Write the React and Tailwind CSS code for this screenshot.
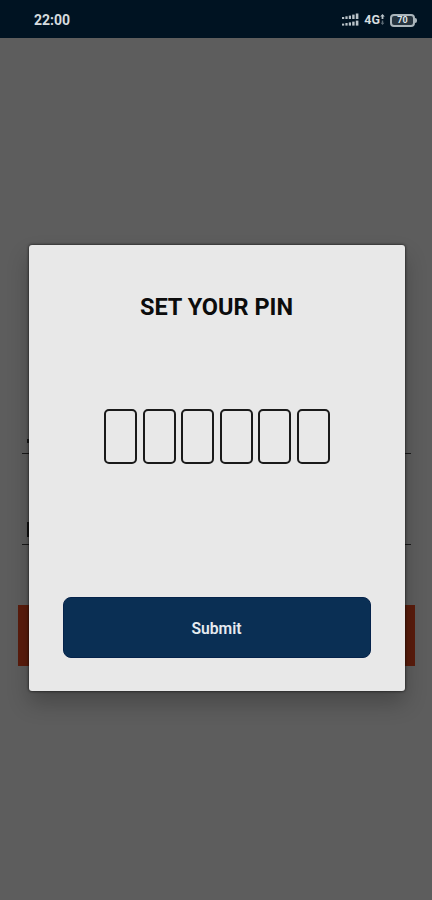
import { useState } from "react";

const PIN_LENGTH = 6;

function SignalIcon() {
  return (
    <svg className="h-[14px] w-[17px]" viewBox="0 0 17 14" fill="#b9c3c9">
      <rect x="0" y="4" width="2.2" height="2" />
      <rect x="3.4" y="3.3" width="2.2" height="2.7" />
      <rect x="6.8" y="2.6" width="2.2" height="3.4" />
      <rect x="10.2" y="1.6" width="2.4" height="4.4" />
      <rect x="13.8" y="0.5" width="2.6" height="5.5" />
      <rect x="0" y="10.6" width="2.2" height="2" />
      <rect x="3.4" y="10" width="2.2" height="2.6" />
      <rect x="6.8" y="9.4" width="2.2" height="3.2" />
      <rect x="10.2" y="8.6" width="2.4" height="4" />
      <rect x="13.8" y="7.6" width="2.6" height="5" />
    </svg>
  );
}

function DataArrows() {
  return (
    <svg className="h-[12px] w-[5px]" viewBox="0 0 5 12">
      <path d="M2.5 0 L4.8 2.6 H3.4 V5 H1.6 V2.6 H0.2 Z" fill="#b9c3c9" />
      <path d="M1.8 6.6 H3.2 V8.8 H4.4 L2.5 11 L0.6 8.8 H1.8 Z" fill="#5c6b75" />
    </svg>
  );
}

function Battery() {
  return (
    <div className="flex items-center">
      <div className="flex h-[13px] w-[25px] items-center justify-center rounded-[4px] border-2 border-[#aab5bb] bg-[#26343f] text-[9px] leading-none font-bold text-[#dfe5e8]">
        70
      </div>
      <div className="h-[5px] w-[2px] rounded-r-full bg-[#aab5bb]" />
    </div>
  );
}

function StatusBar() {
  return (
    <div className="flex h-[38px] items-center justify-between bg-[#001322] pt-[2px] pr-[15px] pl-[34px]">
      <span className="text-[14px] font-bold text-[#d5dcdf]">22:00</span>
      <div className="flex items-center">
        <SignalIcon />
        <span className="ml-[5px] text-[12.5px] leading-none font-bold text-[#d5dcdf]">
          4G
        </span>
        <DataArrows />
        <div className="ml-[5px]">
          <Battery />
        </div>
      </div>
    </div>
  );
}

// Login form, dimmed behind the dialog
function LoginForm() {
  return (
    <div className="pt-[401px]">
      <div className="mr-[21px] ml-[22px] flex h-[15px] border-b border-[#191919] pl-[5px]">
        <span className="h-[4px] w-[3px] bg-[#161616]" />
      </div>
      <div className="mr-[21px] ml-[22px] flex h-[91px] items-end border-b border-[#191919] pb-[7px] pl-[5px]">
        <span className="h-[15px] w-[3px] bg-[#111111]" />
      </div>
      <div className="mt-[60px] mr-[17px] ml-[18px] h-[61px] bg-[#5a1c0c]" />
    </div>
  );
}

function PinDialog() {
  const [pin, setPin] = useState(Array(PIN_LENGTH).fill(""));

  const handleChange = (idx, value) => {
    const next = [...pin];
    next[idx] = value.slice(-1);
    setPin(next);
  };

  return (
    <div className="flex h-[446px] w-[376px] flex-col items-center rounded-[3px] bg-[#e8e8e8] shadow-[0_0_3px_rgba(0,0,0,0.85),0_12px_22px_rgba(0,0,0,0.24)]">
      <h1 className="mt-[45px] text-[23.5px] leading-[34px] font-bold text-[#0c0c0c]">
        SET YOUR PIN
      </h1>
      <div className="mt-[85px] flex gap-[5.5px] pl-[0.6px]">
        {pin.map((digit, idx) => (
          <input
            key={idx}
            className="h-[55px] w-[33px] rounded-[5px] border-2 border-[#1a1a1a] text-center text-xl outline-none"
            type="password"
            inputMode="numeric"
            value={digit}
            onChange={(e) => handleChange(idx, e.target.value)}
          />
        ))}
      </div>
      <button className="mt-[133px] h-[61px] w-[308px] cursor-pointer rounded-[8px] border border-[#05234b] bg-[#0a2f54] pt-[2px] text-[15.7px] font-semibold text-[#e6ebf0]">
        Submit
      </button>
    </div>
  );
}

export default function App() {
  return (
    <div className="relative h-[900px] w-[432px] overflow-hidden bg-[#5d5d5d] font-[Roboto,sans-serif]">
      <StatusBar />
      <LoginForm />
      <div className="absolute inset-0 flex items-start justify-center pt-[245px] pl-px">
        <PinDialog />
      </div>
    </div>
  );
}
